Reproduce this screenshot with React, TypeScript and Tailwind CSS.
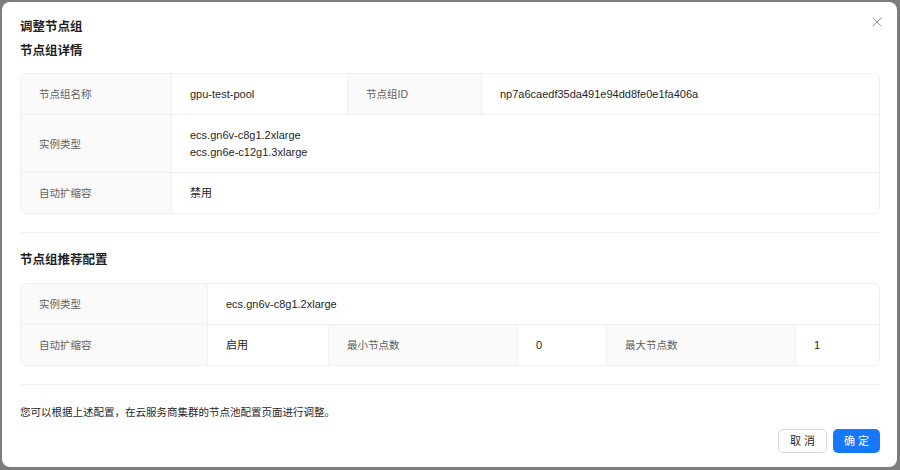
import { X } from "lucide-react";

const font = { fontFamily: '"Liberation Sans", "Noto Sans CJK SC", sans-serif' };

// Label cell and value cell for the bordered description tables
function Label({ children, last }: { children: React.ReactNode; last?: boolean }) {
    return (
        <div className={`flex items-center bg-[#fafafa] px-[18px] pt-px text-[10.5px] leading-[17px] text-[#5f5f5f] border-r border-[#f0f0f0] ${last ? "" : "border-b"}`}>
            {children}
        </div>
    );
}

function Value({ children, last, end, span }: { children: React.ReactNode; last?: boolean; end?: boolean; span?: string }) {
    return (
        <div className={`flex flex-col justify-center px-[18px] py-[11.5px] text-[11px] leading-[17px] text-[#1f1f1f] border-[#f0f0f0] ${last ? "" : "border-b"} ${end ? "" : "border-r"} ${span || ""}`}>
            {children}
        </div>
    );
}

export default function App() {
    return (
        <div className="w-[900px] h-[470px] bg-[#7d7d7d] pt-[2px] pl-[2px] pr-[3px] pb-[3px]" style={font}>
            <div className="relative h-full flex flex-col bg-white rounded-[8px] pl-[18px] pr-[17px] pt-[15px] pb-[14px]">
                {/* Close */}
                <button className="absolute right-[12px] top-[12px] text-[#7f7f7f]">
                    <X size={16} strokeWidth={1.3} />
                </button>

                <h1 className="text-[12.5px] leading-[20px] font-bold text-[#1f1f1f]">调整节点组</h1>
                <h2 className="mt-[4px] text-[12.5px] leading-[20px] font-bold text-[#1f1f1f]">节点组详情</h2>

                {/* Node group details */}
                <div className="mt-[12px] grid grid-cols-[151px_176px_134px_1fr] border border-[#f0f0f0] rounded-[6px] overflow-hidden">
                    <Label>节点组名称</Label>
                    <Value>gpu-test-pool</Value>
                    <Label>节点组ID</Label>
                    <Value end>np7a6caedf35da491e94dd8fe0e1fa406a</Value>

                    <Label>实例类型</Label>
                    <Value end span="col-span-3">
                        <span>ecs.gn6v-c8g1.2xlarge</span>
                        <span>ecs.gn6e-c12g1.3xlarge</span>
                    </Value>

                    <Label last>自动扩缩容</Label>
                    <Value end last span="col-span-3">禁用</Value>
                </div>

                <div className="mt-[18px] h-px bg-[#f0f0f0]" />

                <h2 className="mt-[17px] text-[12.5px] leading-[20px] font-bold text-[#1f1f1f]">节点组推荐配置</h2>

                {/* Recommended config */}
                <div className="mt-[13px] grid grid-cols-[187px_121px_189px_89px_189px_1fr] border border-[#f0f0f0] rounded-[6px] overflow-hidden">
                    <Label>实例类型</Label>
                    <Value end span="col-span-5">ecs.gn6v-c8g1.2xlarge</Value>

                    <Label last>自动扩缩容</Label>
                    <Value last>启用</Value>
                    <Label last>最小节点数</Label>
                    <Value last>0</Value>
                    <Label last>最大节点数</Label>
                    <Value last end>1</Value>
                </div>

                <div className="mt-[18px] h-px bg-[#f0f0f0]" />

                <p className="mt-[17px] text-[10.5px] leading-[20px] text-[#1f1f1f]">
                    您可以根据上述配置，在云服务商集群的节点池配置页面进行调整。
                </p>

                <div className="mt-auto flex justify-end gap-[6px]">
                    <button className="w-[49px] h-[24px] rounded-[5px] border border-[#d9d9d9] bg-white text-[11px] tracking-[3px] pl-[3px] text-[#1f1f1f]">
                        取消
                    </button>
                    <button className="w-[47px] h-[24px] rounded-[5px] bg-[#1677ff] text-[11px] tracking-[3px] pl-[3px] text-white">
                        确定
                    </button>
                </div>
            </div>
        </div>
    );
}
